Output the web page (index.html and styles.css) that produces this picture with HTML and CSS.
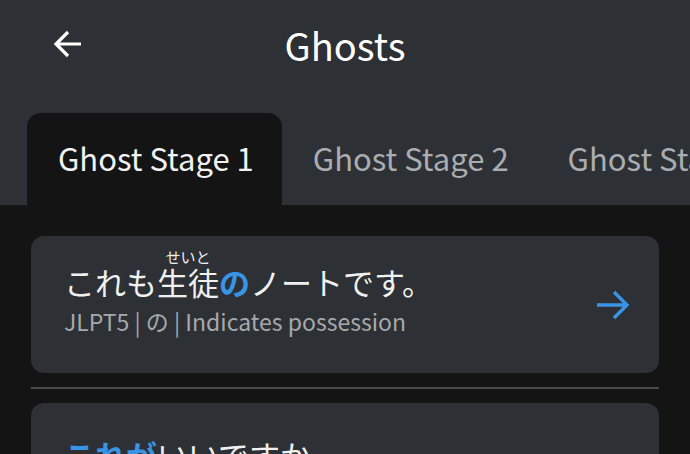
FILE: index.html
```html
<!DOCTYPE html>
<html lang="ja">
<head>
<meta charset="utf-8">
<link rel="stylesheet" href="styles.css">
</head>
<body>
<div class="app">
  <header class="header">
    <div class="topbar">
      <button class="back" aria-label="Back">
        <svg width="32" height="32" viewBox="0 0 32 32"><path d="M29 16H4M16 4L4 16l12 12" fill="none" stroke="#fff" stroke-width="3.2" stroke-linecap="butt" stroke-linejoin="miter"/></svg>
      </button>
      <h1 class="title">Ghosts</h1>
    </div>
    <nav class="tabs">
      <div class="tab active">Ghost Stage 1</div>
      <div class="tab">Ghost Stage 2</div>
      <div class="tab">Ghost Stage 3</div>
    </nav>
  </header>
  <main class="content">
    <div class="card">
      <div class="card-text">
        <div class="sentence">これも<ruby>生徒<rt>せいと</rt></ruby><span class="hl">の</span>ノートです。</div>
        <div class="meta">JLPT5 | の | Indicates possession</div>
      </div>
      <svg class="go" width="36" height="36" viewBox="0 0 36 36"><path d="M2 18h30M19 5l13 13-13 13" fill="none" stroke="#3a94e6" stroke-width="3.4"/></svg>
    </div>
    <hr class="divider">
    <div class="card">
      <div class="card-text card-text-plain">
        <div class="sentence"><span class="hl">これが</span>いいですか</div>
      </div>
    </div>
  </main>
</div>
</body>
</html>
```
FILE: styles.css
```css
html, body {
  margin: 0;
  padding: 0;
  background: #141414;
  overflow: hidden;
}
body {
  font-family: "Noto Sans CJK JP", "Noto Sans", sans-serif;
  color: #fff;
}
.app {
  width: 690px;
  height: 454px;
  overflow: hidden;
}
.header {
  background: #2d3034;
  height: 205px;
  display: flex;
  flex-direction: column;
}
.topbar {
  height: 90px;
  display: flex;
  align-items: center;
  justify-content: center;
  position: relative;
}
.back {
  position: absolute;
  left: 51px;
  top: 28px;
  width: 34px;
  height: 34px;
  padding: 0;
  border: 0;
  background: none;
}
.title {
  margin: 0;
  font-size: 38px;
  font-weight: 400;
  line-height: 1;
}
.tabs {
  margin-top: 23px;
  padding-left: 27px;
  display: flex;
  height: 92px;
  white-space: nowrap;
  overflow: hidden;
}
.tab {
  flex: none;
  padding: 0 28px 4px 31px;
  display: flex;
  align-items: center;
  font-size: 31px;
  color: #a9adb1;
  border-radius: 14px 14px 0 0;
}
.tab.active {
  background: #141414;
  color: #f2f2f2;
}
.content {
  padding: 31px 31px 0;
}
.card {
  background: #2d3034;
  border-radius: 13px;
  height: 137px;
  display: flex;
  align-items: flex-start;
  padding: 15px 28px 0 33px;
  box-sizing: border-box;
}
.card-text {
  flex: 1;
}
.card-text-plain {
  padding-top: 17px;
}
.sentence {
  font-size: 31px;
  line-height: 40px;
  color: #f0f0f0;
  white-space: nowrap;
}
ruby {
  ruby-align: center;
}
ruby rt {
  font-size: 15px;
  line-height: 1;
  position: relative;
  top: -2px;
  ruby-align: center;
}
.hl {
  color: #3a94e6;
  font-weight: 700;
}
.meta {
  margin-top: 4px;
  font-size: 23px;
  color: #a6a9ac;
  line-height: 30px;
}
.divider {
  border: 0;
  height: 2px;
  background: #4a4b4d;
  margin: 14px 0;
}
.go {
  flex: none;
  align-self: center;
  margin-top: -15px;
}
```
